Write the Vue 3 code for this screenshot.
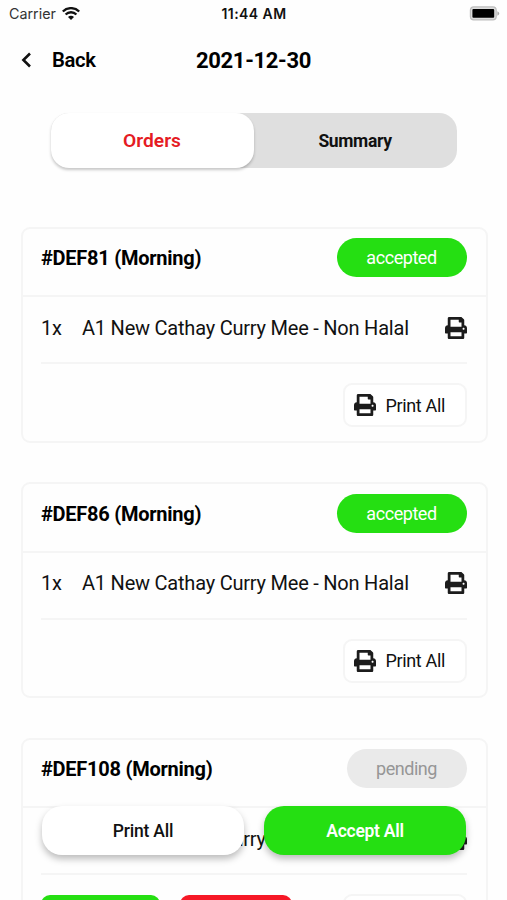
<script setup>
const orders = [
  { id: 'DEF81', status: 'accepted' },
  { id: 'DEF86', status: 'accepted' },
  { id: 'DEF108', status: 'pending' },
]
const printPath =
  'M448 192V77.25c0-8.49-3.37-16.62-9.37-22.63L393.37 9.37c-6-6-14.14-9.37-22.63-9.37H96C78.33 0 64 14.33 64 32v160c-35.35 0-64 28.65-64 64v112c0 8.84 7.16 16 16 16h48v96c0 17.67 14.33 32 32 32h320c17.67 0 32-14.33 32-32v-96h48c8.84 0 16-7.16 16-16V256c0-35.35-28.65-64-64-64zm-64 256H128v-96h256v96zm0-224H128V64h192v48c0 8.84 7.16 16 16 16h48v96zm48 72c-13.25 0-24-10.75-24-24 0-13.26 10.75-24 24-24s24 10.74 24 24c0 13.25-10.75 24-24 24z'
</script>

<template>
  <div class="phone">
    <div class="status-bar">
      <div class="carrier">
        <span>Carrier</span>
        <svg class="wifi" viewBox="0 0 18 13">
          <path d="M0.8 4.5a11.6 11.6 0 0 1 16.4 0M3.6 7.5a7.6 7.6 0 0 1 10.8 0" fill="none" stroke="#111" stroke-width="2.3" />
          <path d="M6 9.9a4.2 4.2 0 0 1 6 0L9 13z" fill="#111" />
        </svg>
      </div>
      <div class="clock">11:44 AM</div>
      <div class="power">
        <svg class="battery" viewBox="0 0 31 15">
          <rect x="1.4" y="0.9" width="25.8" height="13" rx="3.4" fill="#ddd" stroke="#bdbdbd" stroke-width="1.2" />
          <rect x="3.4" y="3" width="21.8" height="8.8" rx="1" fill="#000" />
          <path d="M28.4 5.2q1.8.8 1.8 2.3t-1.8 2.3z" fill="#aaa" />
        </svg>
      </div>
    </div>

    <header class="nav">
      <div class="back">
        <svg class="chevron" viewBox="0 0 12 16">
          <path d="M10 1.5 3.4 8l6.6 6.5" fill="none" stroke="#111" stroke-width="2.6" />
        </svg>
        <span>Back</span>
      </div>
      <h1>2021-12-30</h1>
      <div></div>
    </header>

    <div class="tabs">
      <div class="tab active">Orders</div>
      <div class="tab">Summary</div>
    </div>

    <main class="orders">
      <section v-for="order in orders" :key="order.id" class="card">
        <div class="card-head">
          <h2>#{{ order.id }} (Morning)</h2>
          <span class="badge" :class="order.status">{{ order.status }}</span>
        </div>
        <div class="card-body">
          <div class="item">
            <span class="qty">1x</span>
            <span class="name">A1 New Cathay Curry Mee - Non Halal</span>
            <svg class="print" viewBox="0 0 512 512"><path :d="printPath" fill="#1c1c1c" /></svg>
          </div>
          <div class="actions">
            <template v-if="order.status === 'pending'">
              <button class="decision accept"></button>
              <button class="decision reject"></button>
            </template>
            <button class="print-all">
              <svg class="print" viewBox="0 0 512 512"><path :d="printPath" fill="#1c1c1c" /></svg>
              <span>Print All</span>
            </button>
          </div>
        </div>
      </section>
    </main>

    <footer class="floating">
      <button class="float-btn">Print All</button>
      <button class="float-btn green">Accept All</button>
    </footer>
  </div>
</template>

<style>
body {
  margin: 0;
  background: #fefefe;
}
</style>

<style scoped>
.phone {
  position: relative;
  box-sizing: border-box;
  width: 507px;
  height: 900px;
  overflow: hidden;
  background: #fefefe;
  color: #111;
  font-family: Roboto, sans-serif;
}
button {
  margin: 0;
  padding: 0;
  border: 0;
  font-family: inherit;
}
.status-bar {
  display: grid;
  grid-template-columns: 1fr auto 1fr;
  align-items: center;
  height: 27px;
  padding: 0 7px 0 9px;
  font-family: Inter, sans-serif;
  font-size: 14.3px;
}
.carrier {
  display: flex;
  align-items: center;
  gap: 6px;
  color: #333;
}
.wifi {
  width: 18px;
  height: 13px;
}
.clock {
  font-size: 14px;
  font-weight: 600;
  letter-spacing: 0.45px;
  transform: translateX(-0.5px);
}
.power {
  display: flex;
  justify-content: flex-end;
}
.battery {
  width: 31px;
  height: 15px;
}
.nav {
  display: grid;
  grid-template-columns: 1fr auto 1fr;
  align-items: center;
  height: 66px;
  padding: 0 20px;
  color: #000;
}
.back {
  display: flex;
  align-items: center;
  gap: 20px;
  font-size: 20.3px;
  font-weight: 600;
  letter-spacing: -0.35px;
}
.chevron {
  width: 12px;
  height: 16px;
}
h1 {
  margin: 0;
  font-size: 22px;
  font-weight: 700;
  letter-spacing: -0.33px;
}
.tabs {
  display: flex;
  width: 406px;
  height: 55px;
  margin: 20px 0 0 50.5px;
  border-radius: 18px;
  background: #dfdfdf;
}
.tab {
  display: flex;
  flex: 1;
  align-items: center;
  justify-content: center;
  padding-top: 1px;
  font-size: 17.5px;
  font-weight: 700;
  letter-spacing: -0.35px;
}
.tab.active {
  padding-top: 0;
  border-radius: 18px;
  background: #fff;
  box-shadow: 0 2px 3px rgba(0, 0, 0, 0.22);
  color: #e51b23;
  font-size: 19.2px;
  font-weight: 600;
  letter-spacing: 0;
}
.orders {
  display: flex;
  flex-direction: column;
  gap: 39.5px;
  padding: 58.5px 19.5px 0 20.5px;
}
.card {
  box-sizing: border-box;
  flex: none;
  height: 216px;
  border: 2px solid #f5f5f5;
  border-radius: 9px;
}
.card-head {
  display: flex;
  align-items: flex-start;
  justify-content: space-between;
  box-sizing: border-box;
  height: 68.5px;
  padding: 9.5px 19px 0 18.5px;
  border-bottom: 2px solid #f5f5f5;
}
h2 {
  margin: 0;
  color: #000;
  font-size: 20px;
  font-weight: 700;
  line-height: 40px;
  letter-spacing: -0.25px;
}
.badge {
  box-sizing: border-box;
  height: 39px;
  border-radius: 20px;
  font-size: 18px;
  line-height: 39.5px;
  letter-spacing: -0.45px;
  text-align: center;
}
.accepted {
  width: 130px;
  background: #25df12;
  color: #fff;
}
.pending {
  width: 120px;
  background: #eaeaea;
  color: #969696;
}
.card-body {
  padding: 0 19px 0 18.5px;
}
.item {
  display: flex;
  align-items: center;
  box-sizing: border-box;
  height: 67px;
  padding-bottom: 3.5px;
  border-bottom: 2px solid #f5f5f5;
  font-size: 20px;
  letter-spacing: -0.22px;
}
.qty {
  width: 41px;
}
.name {
  flex: 1;
  white-space: nowrap;
}
.print {
  flex: none;
  width: 22px;
  height: 22px;
}
.actions {
  display: flex;
  padding-top: 19px;
}
.decision {
  height: 43px;
  margin-top: 1px;
  border-radius: 9px;
}
.accept {
  width: 118.5px;
  margin-right: 20px;
  background: #25df12;
}
.reject {
  width: 112px;
  background: #f61826;
}
.print-all {
  display: flex;
  align-items: center;
  box-sizing: border-box;
  width: 124px;
  height: 44px;
  margin-left: auto;
  padding-left: 9px;
  gap: 10px;
  border: 2px solid #f5f5f5;
  border-radius: 9px;
  background: #fff;
  color: #111;
  font-size: 18px;
  letter-spacing: -0.35px;
}
.floating {
  position: absolute;
  top: 806px;
  left: 42px;
  display: flex;
  gap: 20px;
}
.float-btn {
  width: 202px;
  height: 49px;
  border-radius: 20px;
  background: #fff;
  box-shadow: 0 4px 7px rgba(0, 0, 0, 0.26);
  color: #111;
  font-size: 17.5px;
  font-weight: 500;
  letter-spacing: -0.2px;
}
.float-btn.green {
  background: #25df12;
  color: #fff;
  font-weight: 600;
  letter-spacing: -0.28px;
}
</style>
